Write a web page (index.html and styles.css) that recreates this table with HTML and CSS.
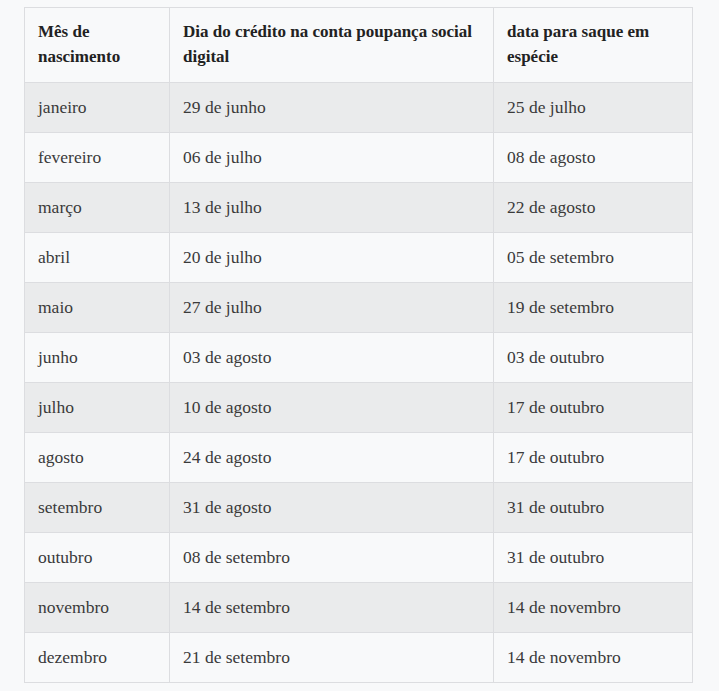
FILE: index.html
```html
<!DOCTYPE html>
<html lang="pt">
<head>
<meta charset="utf-8">
<title>Calendário</title>
<link rel="stylesheet" href="styles.css">
</head>
<body>
<table class="tabela">
  <colgroup>
    <col class="c1"><col class="c2"><col class="c3">
  </colgroup>
  <thead>
    <tr>
      <th>Mês de nascimento</th>
      <th>Dia do crédito na conta poupança social digital</th>
      <th>data para saque em espécie</th>
    </tr>
  </thead>
  <tbody>
    <tr><td>janeiro</td><td>29 de junho</td><td>25 de julho</td></tr>
    <tr><td>fevereiro</td><td>06 de julho</td><td>08 de agosto</td></tr>
    <tr><td>março</td><td>13 de julho</td><td>22 de agosto</td></tr>
    <tr><td>abril</td><td>20 de julho</td><td>05 de setembro</td></tr>
    <tr><td>maio</td><td>27 de julho</td><td>19 de setembro</td></tr>
    <tr><td>junho</td><td>03 de agosto</td><td>03 de outubro</td></tr>
    <tr><td>julho</td><td>10 de agosto</td><td>17 de outubro</td></tr>
    <tr><td>agosto</td><td>24 de agosto</td><td>17 de outubro</td></tr>
    <tr><td>setembro</td><td>31 de agosto</td><td>31 de outubro</td></tr>
    <tr><td>outubro</td><td>08 de setembro</td><td>31 de outubro</td></tr>
    <tr><td>novembro</td><td>14 de setembro</td><td>14 de novembro</td></tr>
    <tr><td>dezembro</td><td>21 de setembro</td><td>14 de novembro</td></tr>
  </tbody>
</table>
</body>
</html>
```
FILE: styles.css
```css
html, body {
  margin: 0;
  background: #f8f9fa;
}
body {
  padding: 7px 0 0 24px;
  font-family: "Liberation Serif", serif;
  color: #2a2a2a;
}
.tabela {
  border-collapse: collapse;
  table-layout: fixed;
  width: 668px;
  font-size: 17.5px;
  line-height: 25px;
}
.c1 { width: 145px; }
.c2 { width: 324px; }
.c3 { width: 199px; }
.tabela th,
.tabela td {
  border: 1px solid #dcdde0;
  text-align: left;
  vertical-align: top;
}
.tabela th {
  font-size: 17px;
  font-weight: bold;
  background: #f8f9fa;
  color: #222;
  padding: 11px 13px 13px;
}
.tabela td {
  color: #3a3a3a;
  padding: 12px 13px;
}
.tabela tbody tr:nth-child(odd) td {
  background: #eaebec;
}
.tabela tbody tr:nth-child(even) td {
  background: #f8f9fa;
}
```
